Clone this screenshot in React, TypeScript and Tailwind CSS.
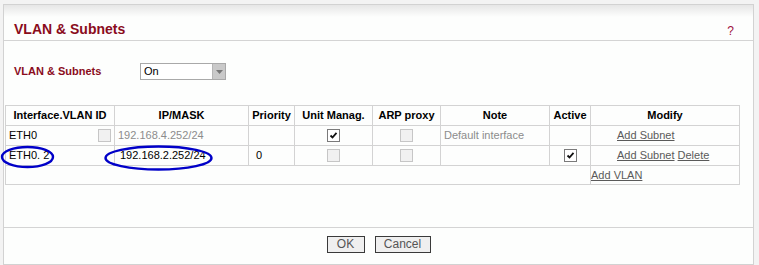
import React from "react";

type BoxProps = { checked?: boolean; disabled?: boolean };

const Box: React.FC<BoxProps> = ({ checked, disabled }) => (
  <span
    className={`inline-flex w-[13px] h-[13px] items-center justify-center border align-middle ${
      disabled ? "border-[#c6c6c6] bg-[#f1f1f1]" : "border-[#7a7a7a] bg-white"
    }`}
  >
    {checked && (
      <svg width="9" height="9" viewBox="0 0 9 9">
        <path d="M1.5 4.5 L3.5 6.5 L7.5 1.8" fill="none" stroke="#111" strokeWidth="1.8" />
      </svg>
    )}
  </span>
);

const cell = "border border-[#d3d3d3] px-[3px] h-[20px] text-[11px] leading-[13px]";
const head = `${cell} font-bold text-center text-black`;
const link = "text-[#5a5a5a] underline";

const App: React.FC = () => {
  return (
    <div className="relative w-[759px] h-[265px] bg-[#f3f3f3] pt-[4px] pl-[3px] font-['Liberation_Sans',Arial,sans-serif] text-black">
      <div className="w-[751px] h-[261px] border border-[#d2d2d2] bg-[#fdfefd] flex flex-col">
        {/* header */}
        <div className="h-[36px] border-b border-[#d4d4d4] bg-[linear-gradient(to_bottom,#e6e6e6,#fdfefd_12px)] flex items-start justify-between pl-[10px] pr-[19px] pt-[16px]">
          <h3 className="text-[14px] leading-[16px] font-bold text-[#8a0c1c]">VLAN &amp; Subnets</h3>
          <span className="text-[12px] leading-[14px] text-[#a0103f] mt-[3px]">?</span>
        </div>

        {/* body */}
        <div className="flex-1 pt-[22px]">
          <div className="flex items-center pl-[10px] h-[17px]">
            <span className="w-[126px] text-[11px] font-bold text-[#8a0c1c]">VLAN &amp; Subnets</span>
            <div className="w-[86px] h-[17px] border border-[#a9a9a9] bg-white flex items-stretch">
              <span className="flex-1 pl-[3px] text-[11px] leading-[15px]">On</span>
              <span className="w-[13px] bg-[#c9c9c9] flex items-center justify-center border-l border-[#b5b5b5]">
                <svg width="7" height="4" viewBox="0 0 7 4">
                  <path d="M0 0 H7 L3.5 4 Z" fill="#777" />
                </svg>
              </span>
            </div>
          </div>

          <table className="mt-[25px] ml-[1px] table-fixed border-collapse w-[734px]">
            <colgroup>
              <col className="w-[109px]" />
              <col className="w-[134px]" />
              <col className="w-[46px]" />
              <col className="w-[78px]" />
              <col className="w-[68px]" />
              <col className="w-[109px]" />
              <col className="w-[41px]" />
              <col className="w-[149px]" />
            </colgroup>
            <thead>
              <tr>
                <th className={head}>Interface.VLAN ID</th>
                <th className={head}>IP/MASK</th>
                <th className={head}>Priority</th>
                <th className={head}>Unit Manag.</th>
                <th className={head}>ARP proxy</th>
                <th className={head}>Note</th>
                <th className={head}>Active</th>
                <th className={head}>Modify</th>
              </tr>
            </thead>
            <tbody>
              <tr>
                <td className={cell}>
                  <div className="flex items-center justify-between">
                    <span>ETH0</span>
                    <Box disabled />
                  </div>
                </td>
                <td className={`${cell} text-[#8c8c8c]`}>192.168.4.252/24</td>
                <td className={cell}></td>
                <td className={`${cell} text-center`}><Box checked /></td>
                <td className={`${cell} text-center`}><Box disabled /></td>
                <td className={`${cell} text-[#8c8c8c]`}>Default interface</td>
                <td className={cell}></td>
                <td className={`${cell} pl-[26px]`}>
                  <span className={link}>Add Subnet</span>
                </td>
              </tr>
              <tr>
                <td className={cell}>ETH0. 2</td>
                <td className={`${cell} pl-[5px]`}>192.168.2.252/24</td>
                <td className={`${cell} pl-[7px]`}>0</td>
                <td className={`${cell} text-center`}><Box disabled /></td>
                <td className={`${cell} text-center`}><Box disabled /></td>
                <td className={cell}></td>
                <td className={`${cell} text-center`}><Box checked /></td>
                <td className={`${cell} pl-[26px]`}>
                  <span className={link}>Add Subnet</span> <span className={link}>Delete</span>
                </td>
              </tr>
              <tr>
                <td colSpan={7} className="border border-[#d3d3d3] h-[19px]"></td>
                <td className="border border-[#d3d3d3] h-[19px] px-0 text-[11px] leading-[13px]">
                  <span className={link}>Add VLAN</span>
                </td>
              </tr>
            </tbody>
          </table>
        </div>

        {/* footer */}
        <div className="h-[37px] border-t border-[#d4d4d4] flex justify-center items-start pt-[8px] gap-[10px]">
          <button className="w-[38px] h-[17px] border border-[#3a3a3a] bg-[#efefef] text-[12px] leading-[15px] text-[#555]">OK</button>
          <button className="w-[56px] h-[17px] border border-[#3a3a3a] bg-[#efefef] text-[12px] leading-[15px] text-[#555]">Cancel</button>
        </div>
      </div>

      {/* hand-drawn annotation marks */}
      <svg className="absolute inset-0 pointer-events-none" width="759" height="265">
        <ellipse cx="27.5" cy="157" rx="25.5" ry="10" fill="none" stroke="#0000c8" strokeWidth="2.4" />
        <ellipse cx="158.5" cy="158" rx="53" ry="11.5" fill="none" stroke="#0000c8" strokeWidth="2.4" />
      </svg>
    </div>
  );
};

export default App;
